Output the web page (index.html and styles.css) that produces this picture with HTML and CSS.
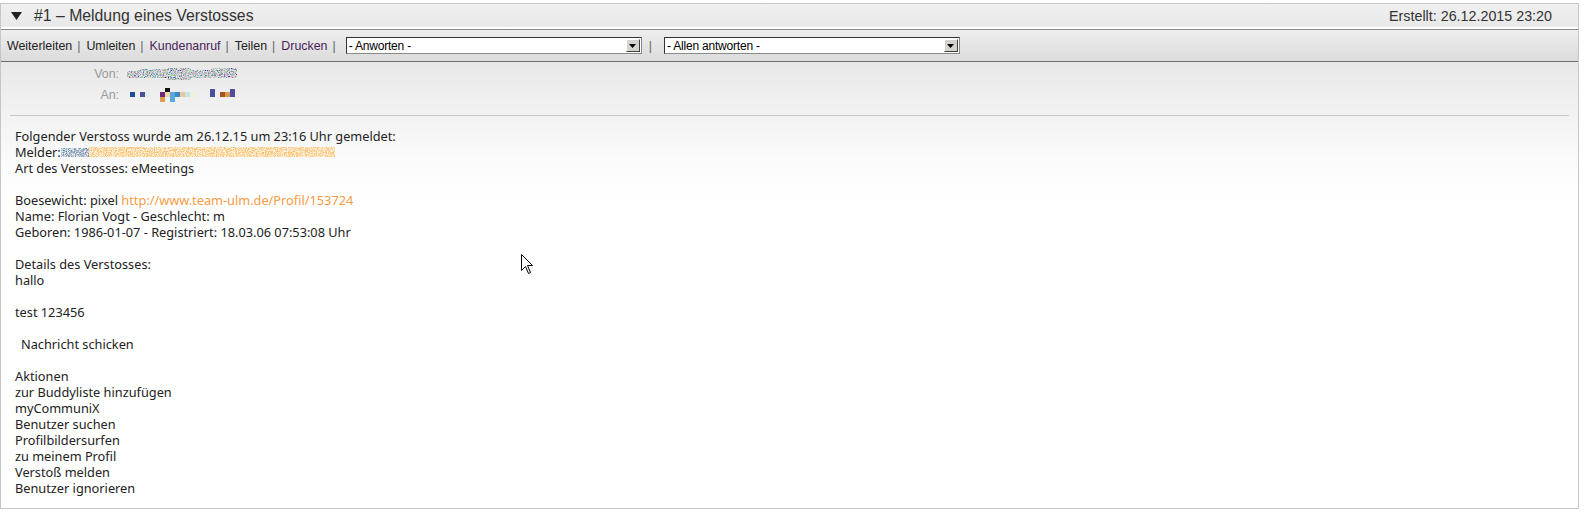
FILE: index.html
```html
<!DOCTYPE html>
<html lang="de">
<head>
<meta charset="utf-8">
<title>Meldung eines Verstosses</title>
<link rel="stylesheet" href="styles.css">
</head>
<body>
<div class="msg">
  <div class="msg-head">
    <div class="msg-title"><svg class="tri" width="11" height="8" viewBox="0 0 11 8"><path d="M0 0H11L5.5 8Z" fill="#222"/></svg><span>#1 – Meldung eines Verstosses</span></div>
    <div class="msg-date">Erstellt: 26.12.2015 23:20</div>
  </div>
  <div class="toolbar">
    <a class="tl">Weiterleiten</a><span class="sep">|</span>
    <a class="tl">Umleiten</a><span class="sep">|</span>
    <a class="tl visited">Kundenanruf</a><span class="sep">|</span>
    <a class="tl">Teilen</a><span class="sep">|</span>
    <a class="tl visited">Drucken</a><span class="sep">|</span>
    <div class="sel"><span class="sel-text">- Anworten -</span><span class="sel-btn"><svg width="7" height="4" viewBox="0 0 7 4"><path d="M0 0H7L3.5 4Z" fill="#000"/></svg></span></div>
    <span class="sep sep-sel">|</span>
    <div class="sel"><span class="sel-text">- Allen antworten -</span><span class="sel-btn"><svg width="7" height="4" viewBox="0 0 7 4"><path d="M0 0H7L3.5 4Z" fill="#000"/></svg></span></div>
  </div>
  <div class="content">
    <div class="addr">
      <div class="addr-row"><span class="addr-label">Von:</span>
        <svg class="blur-mail" width="110" height="14" viewBox="0 0 110 14">
          <defs>
            <filter id="noiseA" x="0" y="0" width="100%" height="100%">
              <feTurbulence type="fractalNoise" baseFrequency="0.85" numOctaves="2" seed="7"/>
              <feColorMatrix values="1.6 0 0 0 -0.4  0 1.5 0 0 -0.4  0 0 1.4 0 -0.3  -3.2 0 0 0 2.2"/>
            </filter>
            <clipPath id="clipA">
              <rect x="0" y="4" width="12" height="7" rx="2"/>
              <rect x="11" y="2" width="30" height="9" rx="2"/>
              <rect x="40" y="1" width="24" height="12" rx="2"/>
              <rect x="63" y="3" width="22" height="8" rx="2"/>
              <rect x="84" y="1" width="26" height="10" rx="2"/>
            </clipPath>
          </defs>
          <rect width="110" height="14" filter="url(#noiseA)" clip-path="url(#clipA)"/>
        </svg>
      </div>
      <div class="addr-row"><span class="addr-label">An:</span>
        <svg class="pix" width="110" height="16" viewBox="0 0 110 16">
          <rect x="3" y="6" width="5" height="5" fill="#1f4f9a"/>
          <rect x="13" y="6" width="5" height="5" fill="#4a4f9a"/>
          <rect x="18" y="6" width="5" height="5" fill="#dcf0f2"/>
          <rect x="33" y="6" width="5" height="5" fill="#6a2a7a"/>
          <rect x="33" y="11" width="5" height="5" fill="#d8a050"/>
          <rect x="38" y="2" width="5" height="4" fill="#111"/>
          <rect x="38" y="6" width="5" height="5" fill="#efd7a8"/>
          <rect x="43" y="6" width="5" height="10" fill="#5aaae0"/>
          <rect x="48" y="6" width="5" height="5" fill="#3a8ac8"/>
          <rect x="53" y="6" width="5" height="5" fill="#f0c49a"/>
          <rect x="58" y="6" width="5" height="5" fill="#bfe6ec"/>
          <rect x="63" y="6" width="5" height="5" fill="#f2efd8"/>
          <rect x="83" y="3" width="5" height="8" fill="#4b4f9e"/>
          <rect x="93" y="6" width="5" height="5" fill="#a65222"/>
          <rect x="98" y="6" width="5" height="5" fill="#d89a4a"/>
          <rect x="103" y="3" width="5" height="8" fill="#4b4f9e"/>
        </svg>
      </div>
    </div>
    <div class="rule"></div>
    <div class="body-text">
      <p>Folgender Verstoss wurde am 26.12.15 um 23:16 Uhr gemeldet:<br>
      Melder:<svg class="blur-melder" width="276" height="12" viewBox="0 0 276 12">
          <defs>
            <filter id="noiseB" x="0" y="0" width="100%" height="100%">
              <feTurbulence type="fractalNoise" baseFrequency="0.9" numOctaves="2" seed="3"/>
              <feColorMatrix values="0 0 0 0 0.98  0.5 0 0 0 0.38  0.4 0 0 0 0.05  -3.4 0 0 0 2.4"/>
            </filter>
            <filter id="noiseC" x="0" y="0" width="100%" height="100%">
              <feTurbulence type="fractalNoise" baseFrequency="0.9" numOctaves="2" seed="11"/>
              <feColorMatrix values="0.8 0 0 0 -0.1  0 0.8 0 0 -0.05  0 0 0.8 0 0.1  -3.2 0 0 0 2.2"/>
            </filter>
          </defs>
          <rect x="0" y="2" width="28" height="9" filter="url(#noiseC)"/>
          <rect x="28" y="1" width="246" height="10" filter="url(#noiseB)"/>
        </svg><br>
      Art des Verstosses: eMeetings</p>
      <p>Boesewicht: pixel <a class="ext">http://www.team-ulm.de/Profil/153724</a><br>
      Name: Florian Vogt - Geschlecht: m<br>
      Geboren: 1986-01-07 - Registriert: 18.03.06 07:53:08 Uhr</p>
      <p>Details des Verstosses:<br>hallo</p>
      <p>test 123456</p>
      <p class="indent">Nachricht schicken</p>
      <p>Aktionen<br>
      zur Buddyliste hinzufügen<br>
      myCommuniX<br>
      Benutzer suchen<br>
      Profilbildersurfen<br>
      zu meinem Profil<br>
      Verstoß melden<br>
      Benutzer ignorieren</p>
    </div>
    <svg class="cursor" width="13" height="21" viewBox="0 0 13 21"><path d="M0.5 0.5V16.5L4.5 12.5L7.5 19.5L9.5 18.5L6.5 11.5H11.5Z" fill="#fff" stroke="#000" stroke-width="1"/></svg>
  </div>
</div>
</body>
</html>
```
FILE: styles.css
```css
html, body { margin: 0; padding: 0; background: #fff; }
body { padding: 3px 9px 0 0; font-family: "Liberation Sans", Arial, sans-serif; }

.msg {
  border: 1px solid #c6c6c6;
  position: relative;
  display: flex;
  flex-direction: column;
}

.msg-head {
  flex: none;
  height: 23px;
  display: flex;
  align-items: center;
  justify-content: space-between;
  background: linear-gradient(#f0f0f0, #e8e8e8);
  border-bottom: 2px solid #fff;
  padding: 0 26px 0 10px;
  color: #333;
}
.msg-title { display: flex; align-items: center; font-size: 15.8px; }
.tri { margin-right: 12px; }
.msg-date { font-size: 14.3px; }

.toolbar {
  flex: none;
  height: 31px;
  border-top: 1px solid #8a8a8a;
  border-bottom: 1px solid #6f6f6f;
  background: linear-gradient(#eeeeee, #dbdbdb);
  display: flex;
  align-items: center;
  padding-left: 6px;
  font-size: 12.4px;
  color: #222;
}
.tl { color: #222; }
.tl.visited { color: #4a1f5a; }
.sep { color: #666; margin: 0 6px 0 5px; }
.sep-sel { margin: 0 8px 0 7px; }

.sel {
  width: 296px;
  height: 17px;
  box-sizing: border-box;
  border: 1px solid #8a8a8a;
  border-top-color: #333;
  border-left-color: #333;
  background: #fff;
  display: flex;
  align-items: center;
  justify-content: space-between;
  font-size: 12px;
  color: #000;
  margin-left: 4px;
}
.sel-text { padding-left: 2px; letter-spacing: -0.2px; }
.sel-btn {
  width: 14px;
  height: 13px;
  margin-right: 1px;
  background: #d6d3ce;
  border: 1px solid;
  border-color: #fff #404040 #404040 #fff;
  box-sizing: border-box;
  display: flex;
  align-items: center;
  justify-content: center;
}

.content {
  flex: none;
  background: linear-gradient(#e8e8e8 0px, #f2f2f2 50px, #fbfbfb 100px, #ffffff 140px);
  position: relative;
  padding-bottom: 12px;
}

.addr { padding-top: 1px; }
.addr-row { display: flex; align-items: center; height: 21px; }
.addr-label { width: 126px; text-align: right; font-size: 12.4px; color: #9a9a9a; padding-right: 8px; box-sizing: border-box; }
.blur-mail { display: block; opacity: 0.9; }
.pix { display: block; margin-top: -1px; }

.rule { border-top: 1px solid #c8c8c8; margin: 10px 9px 0 9px; }

.body-text {
  padding: 12px 0 0 14px;
  font-family: "Noto Sans", "Open Sans", sans-serif;
  font-size: 12.75px;
  line-height: 16px;
  color: #222;
}
.body-text p { margin: 0 0 16px 0; }
.body-text p:last-child { margin-bottom: 0; }
.body-text p.indent { padding-left: 6px; }
.ext { color: #f79b45; }
.blur-melder { vertical-align: -1px; }

.cursor { position: absolute; left: 520px; top: 192px; }
```
